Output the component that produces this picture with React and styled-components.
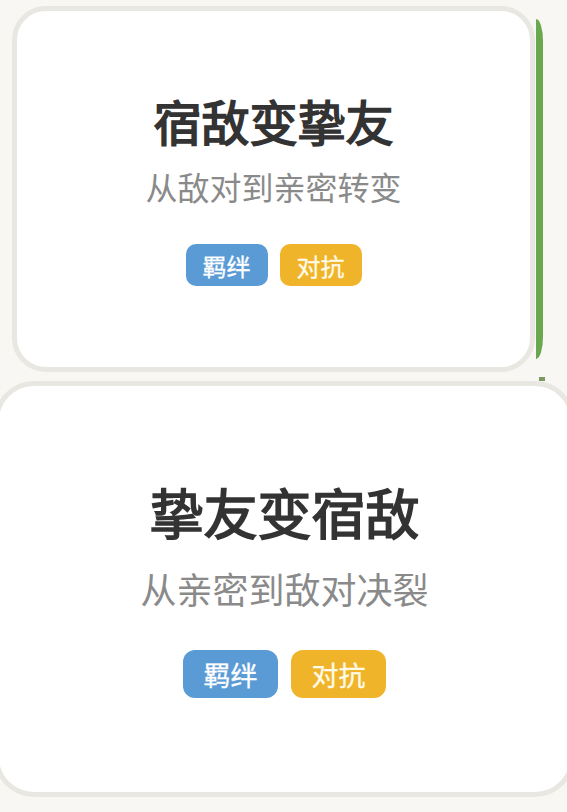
import React from 'react';
import styled, { createGlobalStyle } from 'styled-components';

const GlobalStyle = createGlobalStyle`
  html, body {
    margin: 0;
    padding: 0;
    overflow: hidden;
    background: #f8f7f3;
    font-family: "Noto Sans CJK SC", "Noto Sans", sans-serif;
  }
`;

const sizes = {
  sm: { title: 48, sub: 32, tag: 24, tagW: 82, tagH: 42, radius: 34, titleGap: 15, tagGap: 35, pillRadius: 10, pillGap: 12 },
  lg: { title: 54, sub: 36, tag: 27, tagW: 95, tagH: 48, radius: 40, titleGap: 18, tagGap: 37, pillRadius: 12, pillGap: 13 },
};

const Page = styled.div`
  display: flex;
  flex-direction: column;
  padding-top: 6px;
  width: 567px;
  height: 812px;
`;

const TopRow = styled.div`
  display: flex;
  align-items: center;
  padding-left: 12px;
  gap: 1px;
`;

const Card = styled.div`
  box-sizing: border-box;
  display: flex;
  flex-direction: column;
  align-items: center;
  justify-content: center;
  background: #ffffff;
  border: 5px solid #e9e7e1;
  border-radius: ${({ $size }) => sizes[$size].radius}px;
  width: ${({ $w }) => $w}px;
  height: ${({ $h }) => $h}px;
  margin-left: ${({ $offset }) => $offset || 0}px;
  flex-shrink: 0;
`;

/* green edge of the panel stacked behind the first card */
const BackEdge = styled.div`
  width: 7px;
  height: 340px;
  background: #6aa84f;
  border-radius: 0 7px 7px 0 / 0 22px 22px 0;
`;

const Divider = styled.div`
  display: flex;
  justify-content: flex-start;
  align-items: flex-end;
  height: 9px;
  padding-left: 539px;
`;

const Dot = styled.span`
  display: block;
  width: 6px;
  height: 4px;
  background: #7a9a63;
`;

const Title = styled.div`
  font-size: ${({ $size }) => sizes[$size].title}px;
  line-height: 1.2;
  font-weight: 400;
  -webkit-text-stroke: 1.7px #333333;
  color: #333333;
`;

const Subtitle = styled.div`
  font-size: ${({ $size }) => sizes[$size].sub}px;
  line-height: 1.4;
  color: #8a8a8a;
  margin-top: ${({ $size }) => sizes[$size].titleGap}px;
`;

const Tags = styled.div`
  display: flex;
  gap: ${({ $size }) => sizes[$size].pillGap}px;
  margin-top: ${({ $size }) => sizes[$size].tagGap}px;
`;

const Tag = styled.span`
  display: flex;
  align-items: center;
  justify-content: center;
  width: ${({ $size }) => sizes[$size].tagW}px;
  height: ${({ $size }) => sizes[$size].tagH}px;
  border-radius: ${({ $size }) => sizes[$size].pillRadius}px;
  font-size: ${({ $size }) => sizes[$size].tag}px;
  font-weight: 400;
  -webkit-text-stroke: 0.3px currentColor;
  color: ${({ $tone }) => ($tone === 'blue' ? '#ffffff' : '#fffbe8')};
  background: ${({ $tone }) => ($tone === 'blue' ? '#5b9bd5' : '#f0b42a')};
`;

const TropeCard = ({ size, title, subtitle, ...rest }) => (
  <Card $size={size} {...rest}>
    <Title $size={size}>{title}</Title>
    <Subtitle $size={size}>{subtitle}</Subtitle>
    <Tags $size={size}>
      <Tag $size={size} $tone="blue">羁绊</Tag>
      <Tag $size={size} $tone="orange">对抗</Tag>
    </Tags>
  </Card>
);

const App = () => {
  return (
    <>
      <GlobalStyle />
      <Page>
        <TopRow>
          <TropeCard size="sm" $w={523} $h={366} title="宿敌变挚友" subtitle="从敌对到亲密转变" />
          <BackEdge />
        </TopRow>
        <Divider>
          <Dot />
        </Divider>
        <TropeCard size="lg" $w={581} $h={416} $offset={-6} title="挚友变宿敌" subtitle="从亲密到敌对决裂" />
      </Page>
    </>
  );
};

export default App;
